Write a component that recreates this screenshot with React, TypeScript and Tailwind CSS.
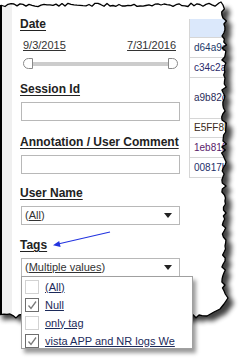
import React from "react";

function makeRng(seed: number) {
  let s = seed;
  return () => {
    s = (s * 9301 + 49297) % 233280;
    return s / 233280;
  };
}

function buildEdge(): string {
  const r = makeRng(11);
  const pts: [number, number][] = [];
  pts.push([-4, 6]);
  for (let x = 2; x <= 216; x += 3) {
    pts.push([x, 5 + (r() - 0.5) * 3.6]);
  }
  pts.push([219, 3]);
  pts.push([221, 2]);
  pts.push([223, 5]);
  for (let y = 9; y <= 294; y += 3) {
    pts.push([224 + (r() - 0.5) * 5, y]);
  }
  pts.push([228, 298]);
  pts.push([224, 304]);
  pts.push([220, 309]);
  pts.push([214, 312]);
  pts.push([207, 316]);
  for (let x = 202; x >= 2; x -= 3) {
    pts.push([x, 316 + (r() - 0.5) * 4]);
  }
  pts.push([-4, 315]);
  return (
    "M" +
    pts.map((p) => p[0].toFixed(1) + "," + p[1].toFixed(1)).join(" L") +
    " Z"
  );
}

const EDGE = buildEdge();
const OUTER = "M-10,-10 H260 V370 H-10 Z ";

function Label({ children, className = "" }: { children: React.ReactNode; className?: string }) {
  return (
    <div className={"-ml-[1px] whitespace-nowrap text-[12px] leading-[14px] font-bold text-[#222] " + className}>
      <span className="underline underline-offset-[2px]">{children}</span>
    </div>
  );
}

function Caret() {
  return (
    <svg width="8" height="5" viewBox="0 0 8 5">
      <polygon points="0,0 8,0 4,5" fill="#222" />
    </svg>
  );
}

function Check() {
  return (
    <svg width="12" height="12" viewBox="0 0 12 12">
      <polyline points="2.5,6.5 5,9.5 10,2.5" fill="none" stroke="#7a7a7a" strokeWidth="1.3" />
    </svg>
  );
}

const rows: { id: string; h: string; color: string }[] = [
  { id: "d64a9e71", h: "h-[20px]", color: "text-[#1d3a6a]" },
  { id: "c34c2a90", h: "h-[20px]", color: "text-[#2a2a6a]" },
  { id: "a9b82c14", h: "h-[41px]", color: "text-[#2b2b5a]" },
  { id: "E5FF8D0A", h: "h-[19px]", color: "text-[#3a2a1a]" },
  { id: "1eb81f33", h: "h-[20px]", color: "text-[#5a1a6a]" },
  { id: "00817b2c", h: "h-[20px]", color: "text-[#1d2f6a]" },
];

const items: { label: string; checked: boolean }[] = [
  { label: "(All)", checked: false },
  { label: "Null", checked: true },
  { label: "only tag", checked: false },
  { label: "vista APP and NR logs We", checked: true },
];

export default function App() {
  return (
    <div className="relative w-[244px] h-[358px] overflow-hidden bg-white font-['Liberation_Sans',Arial,sans-serif]">
      <div className="flex h-[330px] w-[244px]">
        <div className="w-[2px] shrink-0 bg-black" />
        <div className="w-[10px] shrink-0 bg-[#f0f0f0]" />
        <div className="flex min-w-0 flex-1 overflow-hidden bg-white">
          <div className="w-[168px] shrink-0 pl-[9px] pt-[17px]">
            <Label>Date</Label>
            <div className="mt-[8px] flex justify-between pl-[2px] pr-[4px] text-[11px] leading-[13px] text-[#333]">
              <span className="underline">9/3/2015</span>
              <span className="underline">7/31/2016</span>
            </div>
            <div className="mt-[6px] flex h-[11px] items-center px-[2px]">
              <div className="h-[11px] w-[10px] rounded-l-[6px] border border-[#8a8a8a] bg-white" />
              <div className="h-[4px] flex-1 bg-[#cccccc]" />
              <div className="h-[11px] w-[10px] rounded-r-[6px] border border-[#8a8a8a] bg-white" />
            </div>
            <Label className="mt-[13px]">Session Id</Label>
            <div className="mt-[6px] h-[19px] border border-[#b8b8b8] bg-white" />
            <Label className="mt-[14px]">Annotation / User Comment</Label>
            <div className="mt-[6px] h-[19px] border border-[#b8b8b8] bg-white" />
            <Label className="mt-[12px]">User Name</Label>
            <div className="mt-[6px] flex h-[19px] items-center justify-between border border-[#b8b8b8] bg-white pl-[3px] pr-[7px] text-[11px] text-[#333]">
              <span>
                (<span className="underline">All</span>)
              </span>
              <Caret />
            </div>
            <Label className="mt-[13px]">Tags</Label>
            <div className="mt-[6px] flex h-[19px] items-center justify-between border border-[#b8b8b8] bg-white pl-[3px] pr-[7px] text-[11px] text-[#333]">
              <span>
                (<span className="underline">Multiple values</span>)
              </span>
              <Caret />
            </div>
          </div>
          <div className="shrink-0 pl-[9px] pt-[19px]">
            <div className="w-[60px] border-l border-[#d6d6d6] text-[10px] leading-[12px]">
              <div className="h-[19px] border-b border-[#d6d6d6] bg-[#dbe8fb]" />
              {rows.map((r) => (
                <div
                  key={r.id}
                  className={"flex items-center overflow-hidden whitespace-nowrap border-b border-[#d6d6d6] pl-[4px] " + r.h + " " + r.color}
                >
                  {r.id}
                </div>
              ))}
            </div>
          </div>
        </div>
      </div>

      <svg className="pointer-events-none absolute left-0 top-0" width="244" height="358" viewBox="0 0 244 358">
        <defs>
          <filter id="tornBlur" x="-20%" y="-20%" width="140%" height="140%">
            <feGaussianBlur stdDeviation="2.4" />
          </filter>
          <clipPath id="outsideClip">
            <path d={OUTER + EDGE} clipRule="evenodd" />
          </clipPath>
        </defs>
        <path d={OUTER + EDGE} fill="#ffffff" fillRule="evenodd" />
        <g clipPath="url(#outsideClip)">
          <path d={EDGE} transform="translate(6,5)" fill="#000" opacity="0.75" filter="url(#tornBlur)" />
        </g>
        <path d={EDGE} fill="none" stroke="#000" strokeWidth="1.3" strokeLinejoin="round" />
        <line x1="110" y1="232" x2="58" y2="244" stroke="#2233e0" strokeWidth="1.2" />
        <polygon points="53,245.3 60.6,246.9 59.2,240.9" fill="#2233e0" />
      </svg>

      <div className="absolute left-[21px] top-[276px] h-[73px] w-[172px] border border-[#a0a0a0] bg-white pt-[1px] shadow-[3px_4px_4px_rgba(0,0,0,0.4)]">
        {items.map((it) => (
          <div key={it.label} className="flex h-[18px] items-center gap-[6px] pl-[3px]">
            <div
              className={
                "flex h-[14px] w-[14px] items-center justify-center border bg-white " +
                (it.checked ? "border-[#6e6e6e]" : "border-[#d2d2d2]")
              }
            >
              {it.checked ? <Check /> : null}
            </div>
            <span className="text-[11px] leading-[13px] text-[#1c2a5a] underline">{it.label}</span>
          </div>
        ))}
      </div>
    </div>
  );
}
